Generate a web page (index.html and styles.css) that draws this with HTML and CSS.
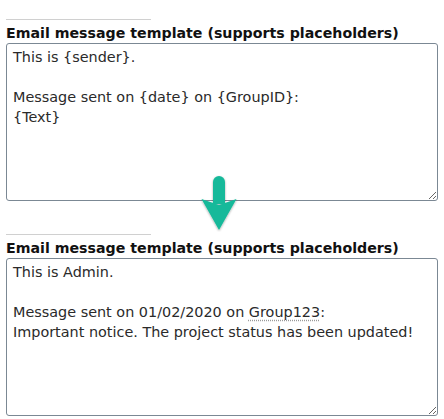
FILE: index.html
```html
<!DOCTYPE html>
<html lang="en">
<head>
  <meta charset="UTF-8" />
  <title>Email template preview</title>
  <link rel="stylesheet" href="styles.css">
</head>
<body>
  <div class="page">
    <!-- Template with placeholders -->
    <div class="field-group">
      <hr class="sep">
      <label class="field-label">Email message template (supports placeholders)</label>
      <div class="field-box">This is {sender}.<br><br>Message sent on {date} on {GroupID}:<br>{Text}</div>
    </div>

    <!-- Arrow between the two versions -->
    <div class="arrow-row">
      <svg class="arrow" width="40" height="60" viewBox="0 0 40 60">
        <defs>
          <filter id="soft" x="-30%" y="-30%" width="160%" height="160%">
            <feDropShadow dx="0" dy="1" stdDeviation="1.2" flood-color="#000" flood-opacity="0.35"/>
          </filter>
        </defs>
        <g filter="url(#soft)" fill="#17b99a">
          <path d="M14 10 a6 6 0 0 1 12 0 V32 H14 Z"/>
          <path d="M2.5 27 L20 33 L37.5 27 L20 58 Z"/>
        </g>
      </svg>
    </div>

    <!-- Same template once the placeholders are filled in -->
    <div class="field-group">
      <hr class="sep">
      <label class="field-label">Email message template (supports placeholders)</label>
      <div class="field-box">This is Admin.<br><br>Message sent on 01/02/2020 on <span class="ref">Group123</span>:<br>Important notice. The project status has been updated!</div>
    </div>
  </div>
</body>
</html>
```

FILE: styles.css
```css
/* Layout of the page */
body {
  margin: 0;
  background: #fff;
  font-family: "DejaVu Sans", Verdana, sans-serif;
  color: #222;
}

.page {
  padding: 19px 6px 0 6px;
  width: 432px;
}

.sep {
  width: 145px;
  margin: 0 0 5px 0;
  border: 0;
  border-top: 1px solid #d0d0d0;
}

.field-label {
  display: block;
  font-weight: bold;
  font-size: 14.2px;
  line-height: 17px;
  color: #111;
  margin-bottom: 1px;
}

.field-box {
  box-sizing: border-box;
  height: 158px;
  border: 1px solid #7b8894;
  border-radius: 3px;
  padding: 3px 6px;
  font-size: 14.4px;
  line-height: 20px;
  color: #2a2a2a;
  overflow: auto;
  resize: vertical;
}

.ref {
  text-decoration: underline dotted #9a9a9a;
  text-underline-offset: 3px;
}

.arrow-row {
  height: 33px;
  position: relative;
}

/* the arrow sits over the bottom edge of the first box */
.arrow {
  position: absolute;
  left: 193px;
  top: -29px;
}
```
